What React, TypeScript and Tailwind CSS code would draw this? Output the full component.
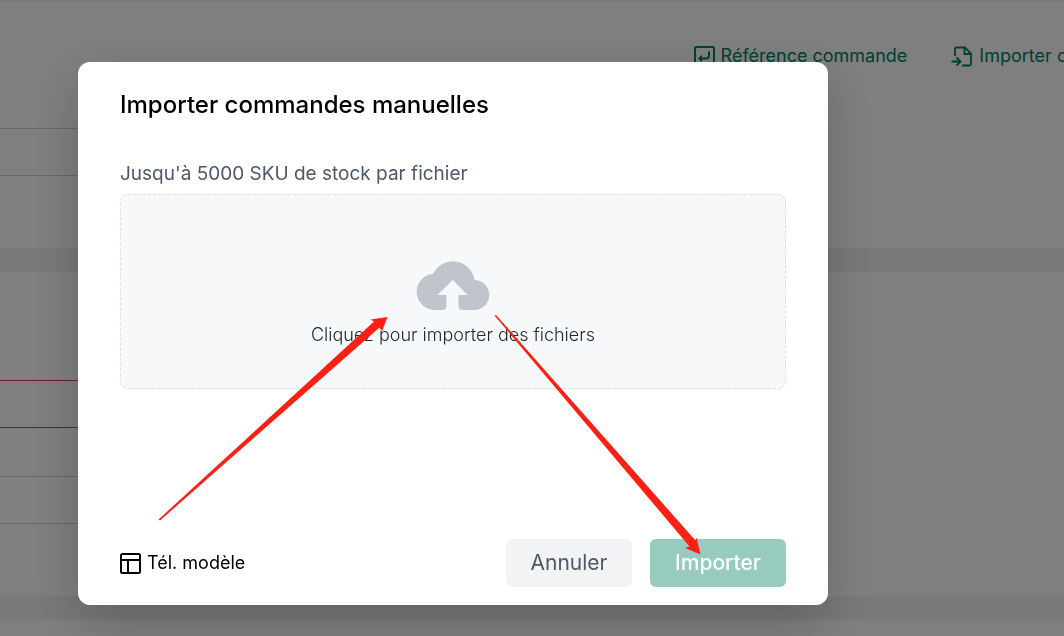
import type { ReactNode } from 'react';
import clsx from 'clsx';

function ReferenceIcon() {
  return (
    <svg className="h-6 w-6 shrink-0" viewBox="0 0 24 24" fill="none" stroke="currentColor" strokeWidth="2" aria-hidden="true">
      <rect x="3" y="3" width="19" height="19" rx="1.5" />
      <path d="M17 7.500v4q0 3-3 3H8" />
      <path d="M9.500 11.500 6.500 14.500l3 3z" fill="currentColor" strokeWidth="1" />
    </svg>
  );
}

function FileImportIcon() {
  return (
    <svg className="h-6 w-6 shrink-0" viewBox="0 0 24 24" fill="none" stroke="currentColor" strokeWidth="1.800" aria-hidden="true">
      <path d="M5 12V5q0-1.500 1.500-1.500H15l6 6V20q0 1.500-1.500 1.500H12" />
      <path d="M14.500 3.500V10H21" />
      <path d="M1.500 17.500H10M6.500 13.500l4 4-4 4" />
    </svg>
  );
}

function TemplateIcon() {
  return (
    <svg className="h-[22px] w-[22px] shrink-0" viewBox="0 0 22 22" fill="none" stroke="currentColor" strokeWidth="2" aria-hidden="true">
      <rect x="1" y="2" width="19" height="19" rx="1.500" />
      <path d="M1 8h19M8 8v13" />
    </svg>
  );
}

function CloudIcon() {
  return (
    <svg className="h-[49px] w-[74px]" viewBox="0 0 74 49" fill="#c0c4cc" aria-hidden="true">
      <path d="M18.500 49A18.200 18.200 0 0 1 17 12.700A22 22 0 0 1 58.500 19A15 15 0 0 1 58 49H47Q42.500 49 42.500 44.500V34H51.500L36.700 19L21.500 34H30.500V44.500Q30.500 49 26 49Z" />
    </svg>
  );
}

function Arrows() {
  return (
    <svg className="pointer-events-none absolute top-0 left-0 h-[543px] w-[750px]" viewBox="0 0 750 543" fill="#ff2015" aria-hidden="true">
      <path d="M80.500 457.500 296 259.500 292.500 257.500 309.500 255 304 269.500 301.500 265.500 82 458.500Z" />
      <path d="M416.500 253.500 418 253 617.500 478.500 618.500 475.500 622.500 492.500 607 486 611.500 484.500Z" />
    </svg>
  );
}

function Field({ invalid }: { invalid?: boolean }) {
  return (
    <div
      className={clsx(
        'h-12 w-1/4 border-t border-b',
        invalid ? 'border-t-[#f5383b] border-b-[#f5383b]' : 'border-t-[#d0d2da] border-b-[#d0d2da]'
      )}
    />
  );
}

function ActionLink({ icon, children }: { icon: ReactNode; children: ReactNode }) {
  return (
    <a href="#" className="flex shrink-0 items-center gap-[5px] text-lg leading-6 whitespace-nowrap text-[#008060]">
      {icon}
      {children}
    </a>
  );
}

function OrderPage() {
  return (
    <div className="flex min-h-screen flex-col gap-6 overflow-hidden bg-[#eff2f5] pt-0.5">
      <section className="h-[246px] bg-white">
        <div className="flex h-[126px] items-start gap-[43px] pt-[42px] pl-[65%]">
          <ActionLink icon={<ReferenceIcon />}>Référence commande</ActionLink>
          <ActionLink icon={<FileImportIcon />}>Importer commandes</ActionLink>
        </div>
        <Field />
      </section>
      <section className="flex h-[324px] flex-col gap-12 bg-white pt-[108px]">
        <Field invalid />
        <Field />
      </section>
      <section className="min-h-4 grow bg-white" />
    </div>
  );
}

function ImportDialog() {
  return (
    <div
      role="dialog"
      aria-modal="true"
      aria-labelledby="import-title"
      className="relative w-full max-w-[750px] rounded-xl bg-white px-[42px] pt-[27px] pb-[18px] shadow-[0_16px_48px_rgba(0,0,0,0.2)]"
    >
      <h2 id="import-title" className="text-2xl leading-8 font-medium text-black">
        Importer commandes manuelles
      </h2>
      <p className="mt-[39px] text-[19px] leading-7 text-[#4c596b]">Jusqu'à 5000 SKU de stock par fichier</p>
      <button
        type="button"
        className="mt-1.5 flex h-[195px] w-full flex-col items-center justify-center gap-[13px] rounded-lg border border-dashed border-[#dcdfe6] bg-[#f6f8fa] pt-6 text-lg leading-6 font-light text-[#212b36]"
      >
        <CloudIcon />
        <span>Cliquez pour importer des fichiers</span>
      </button>
      <div className="mt-[150px] flex items-center justify-between">
        <a href="#" className="flex items-center gap-[5px] text-lg leading-6 text-black">
          <TemplateIcon />
          Tél. modèle
        </a>
        <div className="flex gap-[18px]">
          <button type="button" className="h-12 w-[126px] rounded-md bg-[#f1f3f5] text-[21px] text-[#4c596b]">
            Annuler
          </button>
          <button type="button" className="h-12 w-[136px] rounded-md bg-[#97cbc0] text-[21px] font-medium text-white">
            Importer
          </button>
        </div>
      </div>
      <Arrows />
    </div>
  );
}

export default function App() {
  return (
    <div className="font-[Inter,'Liberation_Sans',sans-serif]">
      <OrderPage />
      <div className="fixed inset-0 overflow-auto bg-black/50 pt-[62px] pr-4 pl-[78px]">
        <ImportDialog />
      </div>
    </div>
  );
}
